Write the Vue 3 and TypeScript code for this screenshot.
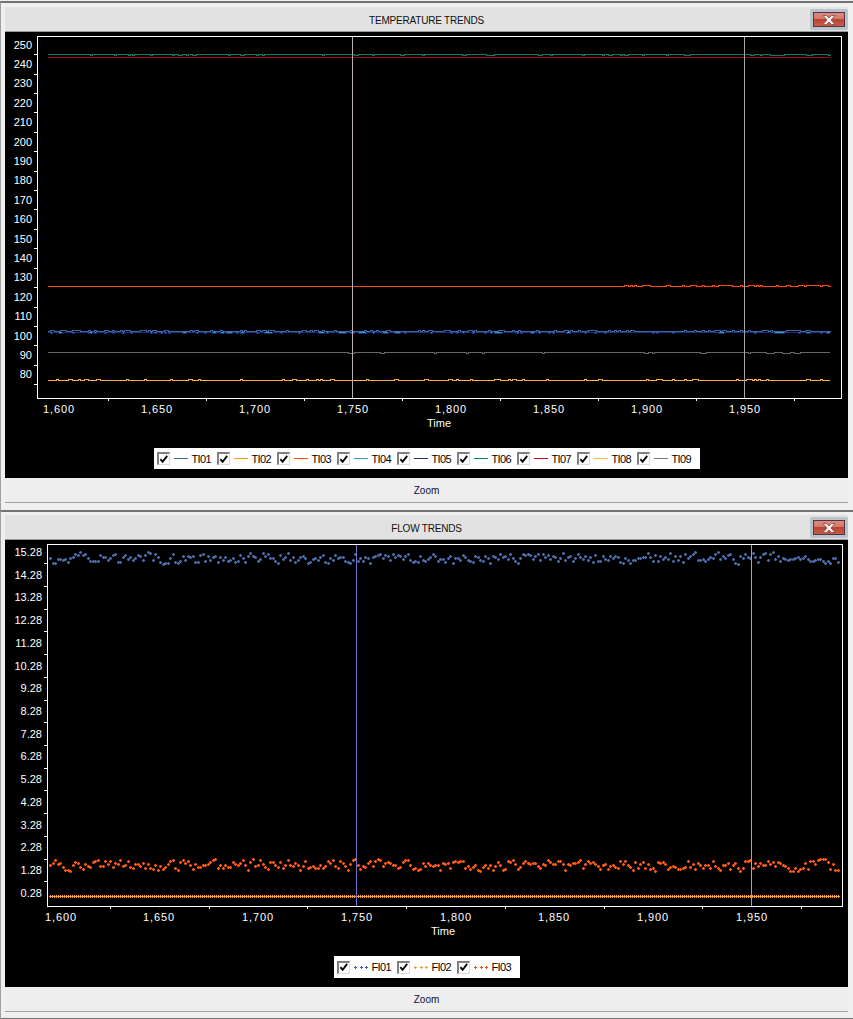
<script setup lang="ts">
interface Series {
  color: string
  d: string
  bold?: boolean
}

interface Chart {
  id: string
  title: string
  top: number
  plot: { left: number; top: number; right: number; bottom: number }
  yTicks: { label: string; y: number }[]
  yMinor: number[]
  xTicks: { label: string; x: number }[]
  xMinor: number[]
  markers: { x: number; color: string }[]
  series: Series[]
  legend: { name: string; color: string; dotted?: boolean }[]
  timeX: number
  chartHeight: number
}

// small seeded generator so the noise is the same on every load
function rng(seed: number) {
  let s = seed * 7919 + 12345
  return () => {
    s = (s * 1664525 + 1013904223) % 4294967296
    return (s >>> 8) / 16777216
  }
}

// step line hopping between y and y + dy; noise only between from and to,
// ramp makes it get denser towards the end
function stepLine(
  x0: number,
  x1: number,
  y: number,
  rate: number,
  seed: number,
  dy = -1,
  from = x0,
  to = x1,
  ramp = false,
) {
  const r = rng(seed)
  let up = false
  let d = `M${x0} ${y + 0.5}`
  for (let x = x0 + 2; x <= x1; x += 2) {
    let p = x < from || x > to ? 0 : rate
    if (ramp) p *= 0.15 + (0.85 * (x - from)) / (to - from)
    up = up ? r() > 0.6 : r() < p
    d += `H${x}V${(up ? y + dy : y) + 0.5}`
  }
  return d
}

function plusPath(x0: number, x1: number, step: number, y: number, spread: number, seed: number) {
  const r = rng(seed)
  let d = ''
  let drift = 0
  for (let x = x0; x <= x1; x += step) {
    drift = drift * 0.3 + (r() - 0.5) * spread
    const py = Math.round(y + drift)
    const px = Math.round(x)
    d += `M${px - 1} ${py + 0.5}h3M${px + 0.5} ${py - 1}v3`
  }
  return d
}

function makeTicks(start: number, gap: number, labels: string[]) {
  return labels.map((label, i) => ({ label, y: Math.round(start + gap * i) }))
}

const tempLabels: string[] = []
for (let v = 250; v >= 80; v -= 10) tempLabels.push(String(v))
const flowLabels: string[] = []
for (let v = 15; v >= 0; v--) flowLabels.push(`${v}.28`)
const timeLabels = ['1,600', '1,650', '1,700', '1,750', '1,800', '1,850', '1,900', '1,950']

const temperature: Chart = {
  id: 'temp',
  title: 'TEMPERATURE TRENDS',
  top: 32,
  plot: { left: 37, top: 36, right: 841, bottom: 398 },
  yTicks: makeTicks(44.5, 19.41, tempLabels),
  yMinor: tempLabels.map((_, i) => Math.round(44.5 + 19.41 * (i + 0.5))),
  xTicks: timeLabels.map((label, i) => ({ label, x: Math.round(58.7 + 98 * i) })),
  xMinor: timeLabels.map((_, i) => Math.round(58.7 + 98 * (i + 0.5))),
  markers: [
    { x: 352, color: '#bcaeb6' },
    { x: 744, color: '#a8a4a8' },
  ],
  series: [
    { color: '#ff9a1f', d: stepLine(48, 830, 380, 0.12, 11) },
    { color: '#f7b24e', d: stepLine(48, 830, 380, 0.12, 11) },
    { color: '#b00020', d: stepLine(48, 830, 57, 0, 13) },
    { color: '#00806a', d: stepLine(48, 830, 54, 0.12, 14, 1) },
    { color: '#3a9cb0', d: stepLine(48, 830, 332, 0, 16) },
    { color: '#1a2f70', d: stepLine(48, 830, 332, 0.25, 15, 1) },
    { color: '#3d66a8', d: stepLine(48, 830, 331, 0.25, 17, -1) },
    { color: '#ff4a10', d: stepLine(48, 830, 286, 0.5, 18, -1, 595, 830, true) },
    { color: '#666666', d: stepLine(48, 830, 352, 0.06, 19, 1, 335, 800) },
  ],
  legend: [
    { name: 'TI01', color: '#3d66a8' },
    { name: 'TI02', color: '#ff9a1f' },
    { name: 'TI03', color: '#ff4a10' },
    { name: 'TI04', color: '#3a9cb0' },
    { name: 'TI05', color: '#1a2f70' },
    { name: 'TI06', color: '#00806a' },
    { name: 'TI07', color: '#c00018' },
    { name: 'TI08', color: '#fdb834' },
    { name: 'TI09', color: '#777777' },
  ],
  timeX: 439,
  chartHeight: 446,
}

const flow: Chart = {
  id: 'flow',
  title: 'FLOW TRENDS',
  top: 540,
  plot: { left: 47, top: 544, right: 842, bottom: 906 },
  yTicks: makeTicks(552, 22.71, flowLabels),
  yMinor: flowLabels.slice(0, 15).map((_, i) => Math.round(552 + 22.71 * (i + 0.5))),
  xTicks: timeLabels.map((label, i) => ({ label, x: Math.round(60.7 + 98.7 * i) })),
  xMinor: timeLabels.map((_, i) => Math.round(60.7 + 98.7 * (i + 0.5))),
  markers: [
    { x: 356, color: '#7272c8' },
    { x: 751, color: '#a8a0a8' },
  ],
  series: [
    { color: '#4a6cab', d: plusPath(50, 838, 2.5, 558, 10, 21), bold: true },
    { color: '#ff5a14', d: plusPath(50, 838, 2.5, 865, 10, 22), bold: true },
    { color: '#ffa040', d: plusPath(50, 838, 2, 896, 0, 23) },
  ],
  legend: [
    { name: 'FI01', color: '#3d66a8', dotted: true },
    { name: 'FI02', color: '#ff9a1f', dotted: true },
    { name: 'FI03', color: '#ff4a10', dotted: true },
  ],
  timeX: 443,
  chartHeight: 447,
}

const charts: Chart[] = [temperature, flow]
</script>

<template>
  <div class="page">
    <section v-for="c in charts" :key="c.id" class="win" :class="`win-${c.id}`">
      <header class="titlebar">
        <span class="title">{{ c.title }}</span>
        <button class="close" type="button" aria-label="Close">
          <svg width="14" height="10" viewBox="0 0 14 10">
            <path
              d="M1 .5h3.5L7 3 9.5.5H13L9 5l4 4.5H9.5L7 7 4.500 9.500H1L5 5z"
              fill="#f4f0f0"
              stroke="#7a4a50"
              stroke-width=".8"
            />
          </svg>
        </button>
      </header>

      <div class="chart" :style="{ height: c.chartHeight + 'px' }">
        <svg
          class="plot"
          width="843"
          height="416"
          :viewBox="`5 ${c.top} 843 416`"
          shape-rendering="crispEdges"
        >
          <!-- plot frame -->
          <path
            :d="`M${c.plot.left + 0.5} ${c.plot.top + 0.5}H${c.plot.right + 0.5}V${c.plot.bottom + 0.5}H${c.plot.left + 0.5}Z`"
            fill="none"
            stroke="#fff"
          />

          <!-- y axis -->
          <template v-for="t in c.yTicks" :key="t.label">
            <path :d="`M${c.plot.left - 2} ${t.y + 0.5}h2`" stroke="#0000b0" />
            <text class="ylabel" :x="c.plot.left - 5" :y="t.y + 4" text-anchor="end">{{ t.label }}</text>
          </template>
          <path
            v-for="y in c.yMinor"
            :key="y"
            :d="`M${c.plot.left - 3} ${y + 0.5}h3`"
            stroke="#fff"
          />

          <!-- x axis -->
          <template v-for="t in c.xTicks" :key="t.label">
            <path :d="`M${t.x + 0.5} ${c.plot.bottom + 1}v2`" stroke="#0000b0" />
            <text class="xlabel" :x="t.x" :y="c.plot.bottom + 15" text-anchor="middle">{{ t.label }}</text>
          </template>
          <path
            v-for="x in c.xMinor"
            :key="x"
            :d="`M${x + 0.5} ${c.plot.bottom + 1}v2`"
            stroke="#fff"
          />
          <text class="ylabel" :x="c.timeX" :y="c.plot.bottom + 29" text-anchor="middle">Time</text>

          <!-- data -->
          <path
            v-for="(s, i) in c.series"
            :key="i"
            class="trace"
            :class="{ bold: s.bold }"
            :d="s.d"
            :stroke="s.color"
          />

          <!-- vertical cursors -->
          <path
            v-for="m in c.markers"
            :key="m.x"
            :d="`M${m.x + 0.5} ${c.plot.top + 1}V${c.plot.bottom}`"
            :stroke="m.color"
          />
        </svg>

        <div class="legend">
          <div v-for="item in c.legend" :key="item.name" class="legend-item">
            <span class="check">
              <svg width="11" height="11" viewBox="0 0 11 11">
                <path d="M1.5 5l2.500 3 5-6.500" fill="none" stroke="#000" stroke-width="2" />
              </svg>
            </span>
            <svg class="swatch" width="14" height="5" viewBox="0 0 14 5">
              <path
                v-if="item.dotted"
                d="M0 2.500h3M1.500 1v3M6 2.500h3M7.500 1v3M11 2.500h3M12.500 1v3"
                :stroke="item.color"
                fill="none"
                shape-rendering="crispEdges"
              />
              <path v-else d="M0 2.500h14" :stroke="item.color" shape-rendering="crispEdges" />
            </svg>
            <span class="legend-name">{{ item.name }}</span>
          </div>
        </div>
      </div>

      <footer class="footer">Zoom</footer>
    </section>
  </div>
</template>

<style scoped>
.page {
  width: 853px;
  padding-top: 1px;
  font-family: "Liberation Sans", Arial, sans-serif;
}

.win {
  box-sizing: border-box;
  border-top: 2px solid #727272;
  border-left: 1px solid #a0a0a0;
  padding: 4px 5px 7px 4px;
  background: #efefef;
}

.win-flow {
  padding: 3px 5px 6px 4px;
  border-bottom: 2px solid #727272;
}

.titlebar {
  position: relative;
  display: flex;
  align-items: center;
  justify-content: center;
  height: 24px;
  background: #e2e2e2;
  border-bottom: 1px solid #9a9a9a;
}

.title {
  padding-top: 2px;
  font-size: 10px;
  letter-spacing: -0.2px;
  color: #111;
}

.close {
  position: absolute;
  top: 2px;
  right: 0;
  box-sizing: border-box;
  display: flex;
  align-items: center;
  justify-content: center;
  width: 38px;
  height: 21px;
  padding: 0;
  border: 3px solid #b9c3cc;
  border-radius: 2px;
  outline: none;
  background: linear-gradient(#dc9086 0, #d27868 45%, #b9442f 50%, #c9604a 100%);
  box-shadow: inset 0 0 0 1px #5a3040;
}

.chart {
  background: #000;
}

.plot {
  display: block;
}

.trace {
  fill: none;
}

.trace.bold {
  stroke-width: 1.4;
  shape-rendering: auto;
}

.ylabel {
  font-size: 11px;
  fill: #fff;
}

.xlabel {
  font-size: 11px;
  letter-spacing: 0.9px;
  fill: #fff;
}

.legend {
  display: flex;
  width: max-content;
  height: 21px;
  align-items: center;
  margin: 0 auto;
  padding: 0 3px;
  background: #fff;
}

.win-flow .legend {
  height: 22px;
}

.legend-item {
  display: flex;
  align-items: center;
  width: 60px;
  height: 100%;
}

.check {
  box-sizing: border-box;
  flex: none;
  display: flex;
  align-items: center;
  justify-content: center;
  width: 13px;
  height: 13px;
  background: #fff;
  border: 1px solid #dcdcdc;
  border-top: 2px solid #808080;
  border-left: 2px solid #808080;
}

.swatch {
  flex: none;
  margin-left: 4px;
}

.legend-name {
  margin-left: 4px;
  font-size: 11px;
  letter-spacing: -0.6px;
  color: #000;
}

.footer {
  height: 24px;
  line-height: 26px;
  text-align: center;
  font-size: 10px;
  color: #10103a;
  background: #eeeeee;
  border-bottom: 1px solid #a0a0a0;
}
</style>

<style>
html,
body {
  background: #efefef;
}
</style>
